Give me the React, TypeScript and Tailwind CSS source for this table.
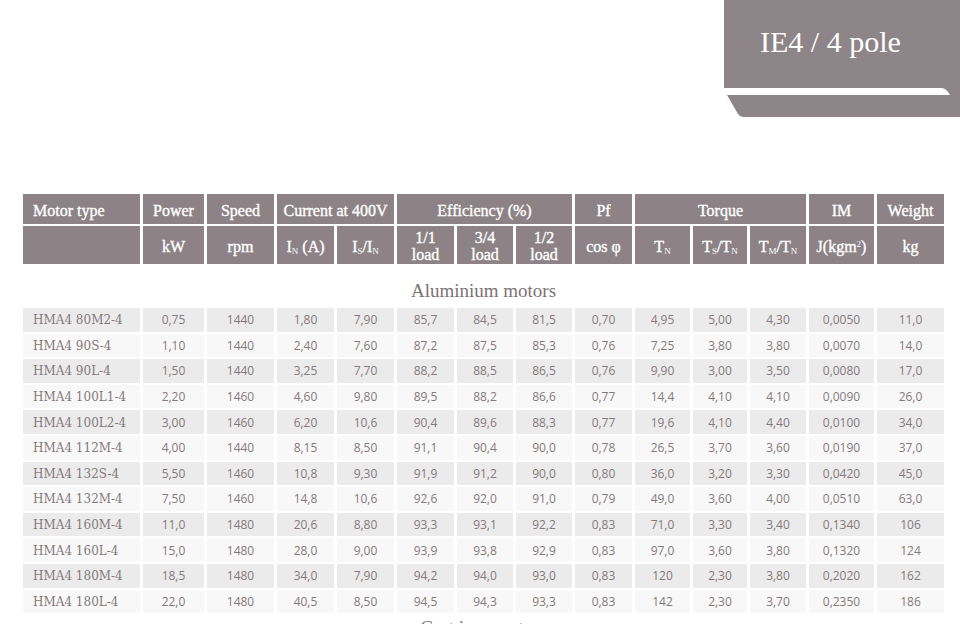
import React from "react";

const rows: string[][] = [
  ["HMA4 80M2-4", "0,75", "1440", "1,80", "7,90", "85,7", "84,5", "81,5", "0,70", "4,95", "5,00", "4,30", "0,0050", "11,0"],
  ["HMA4 90S-4", "1,10", "1440", "2,40", "7,60", "87,2", "87,5", "85,3", "0,76", "7,25", "3,80", "3,80", "0,0070", "14,0"],
  ["HMA4 90L-4", "1,50", "1440", "3,25", "7,70", "88,2", "88,5", "86,5", "0,76", "9,90", "3,00", "3,50", "0,0080", "17,0"],
  ["HMA4 100L1-4", "2,20", "1460", "4,60", "9,80", "89,5", "88,2", "86,6", "0,77", "14,4", "4,10", "4,10", "0,0090", "26,0"],
  ["HMA4 100L2-4", "3,00", "1460", "6,20", "10,6", "90,4", "89,6", "88,3", "0,77", "19,6", "4,10", "4,40", "0,0100", "34,0"],
  ["HMA4 112M-4", "4,00", "1440", "8,15", "8,50", "91,1", "90,4", "90,0", "0,78", "26,5", "3,70", "3,60", "0,0190", "37,0"],
  ["HMA4 132S-4", "5,50", "1460", "10,8", "9,30", "91,9", "91,2", "90,0", "0,80", "36,0", "3,20", "3,30", "0,0420", "45,0"],
  ["HMA4 132M-4", "7,50", "1460", "14,8", "10,6", "92,6", "92,0", "91,0", "0,79", "49,0", "3,60", "4,00", "0,0510", "63,0"],
  ["HMA4 160M-4", "11,0", "1480", "20,6", "8,80", "93,3", "93,1", "92,2", "0,83", "71,0", "3,30", "3,40", "0,1340", "106"],
  ["HMA4 160L-4", "15,0", "1480", "28,0", "9,00", "93,9", "93,8", "92,9", "0,83", "97,0", "3,60", "3,80", "0,1320", "124"],
  ["HMA4 180M-4", "18,5", "1480", "34,0", "7,90", "94,2", "94,0", "93,0", "0,83", "120", "2,30", "3,80", "0,2020", "162"],
  ["HMA4 180L-4", "22,0", "1480", "40,5", "8,50", "94,5", "94,3", "93,3", "0,83", "142", "2,30", "3,70", "0,2350", "186"],
];

const serif = "font-['Liberation_Serif',serif]";
const dserif = "font-['DejaVu_Serif',serif]";
const sans = "font-['Open_Sans','Liberation_Sans',sans-serif]";

function H1({ children, span, left }: { children: React.ReactNode; span?: string; left?: boolean }) {
  return (
    <div
      className={`${span ?? ""} h-[30px] pt-[4px] bg-[#8d8386] text-white flex items-center ${left ? "justify-start pl-[10px]" : "justify-center"} text-[16px] leading-none [-webkit-text-stroke:0.35px_white] ${serif}`}
    >
      {children}
    </div>
  );
}

function H2({ children }: { children?: React.ReactNode }) {
  return (
    <div
      className={`h-[38px] pt-[2px] bg-[#8d8386] text-white flex flex-col items-center justify-center text-center text-[16px] leading-[17px] [-webkit-text-stroke:0.35px_white] ${serif}`}
    >
      {children}
    </div>
  );
}

const Sub = ({ children }: { children: React.ReactNode }) => (
  <sub className="text-[9px] [-webkit-text-stroke:0px]">{children}</sub>
);

export default function App() {
  return (
    <div className="w-[960px] h-[624px] overflow-hidden bg-white">
      <div className="flex justify-end">
        <div className="w-[236px]">
          <div className={`h-[88px] bg-[#8e8588] pl-[36px] pt-[27px] text-white text-[30px] leading-[30px] ${serif}`}>
            IE4 / 4 pole
          </div>
          <svg width="236" height="29" viewBox="0 0 236 29" className="block">
            <path d="M218 0 H236 V29 H19 Q16 29 14 26 L3 7 H226 Q223 1 218 0 Z" fill="#8e8588" />
          </svg>
        </div>
      </div>

      <div className="pl-[23px] mt-[77px]">
        <div className="grid grid-cols-[117px_61px_67px_57px_57px_57px_56px_56px_57px_55px_54px_56px_65px_67px] gap-x-[3px] gap-y-[2px]">
          <H1 left>Motor type</H1>
          <H1>Power</H1>
          <H1>Speed</H1>
          <H1 span="col-span-2">Current at 400V</H1>
          <H1 span="col-span-3">Efficiency (%)</H1>
          <H1>Pf</H1>
          <H1 span="col-span-3">Torque</H1>
          <H1>IM</H1>
          <H1>Weight</H1>

          <H2 />
          <H2>kW</H2>
          <H2>rpm</H2>
          <H2>
            <span>
              I<Sub>N</Sub> (A)
            </span>
          </H2>
          <H2>
            <span>
              I<Sub>S</Sub>/I<Sub>N</Sub>
            </span>
          </H2>
          <H2>
            <span>1/1</span>
            <span>load</span>
          </H2>
          <H2>
            <span>3/4</span>
            <span>load</span>
          </H2>
          <H2>
            <span>1/2</span>
            <span>load</span>
          </H2>
          <H2>cos φ</H2>
          <H2>
            <span>
              T<Sub>N</Sub>
            </span>
          </H2>
          <H2>
            <span>
              T<Sub>S</Sub>/T<Sub>N</Sub>
            </span>
          </H2>
          <H2>
            <span>
              T<Sub>M</Sub>/T<Sub>N</Sub>
            </span>
          </H2>
          <H2>
            <span>
              J(kgm<sup className="text-[9px] [-webkit-text-stroke:0px]">2</sup>)
            </span>
          </H2>
          <H2>kg</H2>

          <div className={`col-span-14 h-[40px] pt-[15px] text-center text-[19px] leading-[19px] text-[#7d7274] ${serif}`}>
            Aluminium motors
          </div>

          {rows.map((r, i) =>
            r.map((v, j) => (
              <div
                key={`${i}-${j}`}
                className={`h-[23.6px] pt-[1px] flex items-center ${i % 2 === 0 ? "bg-[#ebebeb]" : "bg-[#f8f8f8]"} text-[#857a7b] ${
                  j === 0 ? `justify-start pl-[10px] text-[12px] ${dserif}` : `justify-center text-[12px] ${sans}`
                }`}
              >
                {v}
              </div>
            ))
          )}

          <div className={`col-span-14 h-[30px] pt-[3px] text-center text-[19px] leading-[19px] text-[#7d7274] ${serif}`}>
            Cast iron motors
          </div>
        </div>
      </div>
    </div>
  );
}
